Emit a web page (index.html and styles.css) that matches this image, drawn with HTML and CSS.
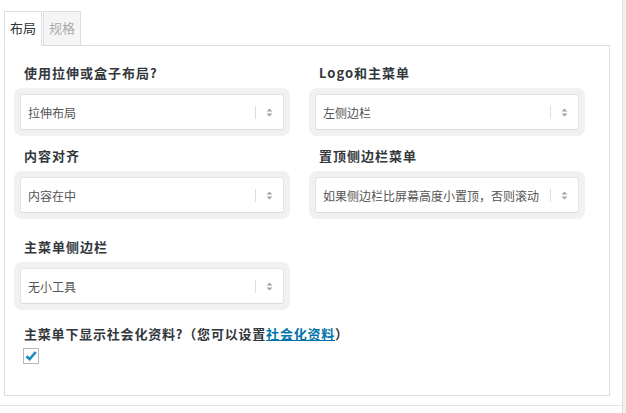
FILE: index.html
```html
<!DOCTYPE html>
<html lang="zh-CN">
<head>
    <meta charset="UTF-8">
    <title>主题选项</title>
    <link rel="stylesheet" href="styles.css">
</head>
<body>
    <div class="page">
        <div class="options-box">
            <div class="tabs">
                <div class="tab active">布局</div>
                <div class="tab">规格</div>
            </div>

            <div class="panel">
                <div class="row">
                    <div class="field">
                        <div class="field-label">使用拉伸或盒子布局?</div>
                        <div class="select-wrap">
                            <div class="select">
                                <span class="select-text">拉伸布局</span>
                                <span class="select-sep"></span>
                                <svg class="select-arrows" width="7" height="9" viewBox="0 0 7 9"><path d="M3.5 0.5 L6.5 3.5 L0.5 3.5 Z M3.5 8.5 L6.5 5.5 L0.5 5.5 Z" fill="#a0a5aa"/></svg>
                            </div>
                        </div>
                    </div>
                    <div class="field">
                        <div class="field-label">Logo和主菜单</div>
                        <div class="select-wrap">
                            <div class="select">
                                <span class="select-text">左侧边栏</span>
                                <span class="select-sep"></span>
                                <svg class="select-arrows" width="7" height="9" viewBox="0 0 7 9"><path d="M3.5 0.5 L6.5 3.5 L0.5 3.5 Z M3.5 8.5 L6.5 5.5 L0.5 5.5 Z" fill="#a0a5aa"/></svg>
                            </div>
                        </div>
                    </div>
                    <div class="field">
                        <div class="field-label">内容对齐</div>
                        <div class="select-wrap">
                            <div class="select">
                                <span class="select-text">内容在中</span>
                                <span class="select-sep"></span>
                                <svg class="select-arrows" width="7" height="9" viewBox="0 0 7 9"><path d="M3.5 0.5 L6.5 3.5 L0.5 3.5 Z M3.5 8.5 L6.5 5.5 L0.5 5.5 Z" fill="#a0a5aa"/></svg>
                            </div>
                        </div>
                    </div>
                    <div class="field">
                        <div class="field-label">置顶侧边栏菜单</div>
                        <div class="select-wrap">
                            <div class="select">
                                <span class="select-text">如果侧边栏比屏幕高度小置顶，否则滚动</span>
                                <span class="select-sep"></span>
                                <svg class="select-arrows" width="7" height="9" viewBox="0 0 7 9"><path d="M3.5 0.5 L6.5 3.5 L0.5 3.5 Z M3.5 8.5 L6.5 5.5 L0.5 5.5 Z" fill="#a0a5aa"/></svg>
                            </div>
                        </div>
                    </div>
                </div>

                <div class="row row-spaced">
                    <div class="field">
                        <div class="field-label">主菜单侧边栏</div>
                        <div class="select-wrap">
                            <div class="select">
                                <span class="select-text">无小工具</span>
                                <span class="select-sep"></span>
                                <svg class="select-arrows" width="7" height="9" viewBox="0 0 7 9"><path d="M3.5 0.5 L6.5 3.5 L0.5 3.5 Z M3.5 8.5 L6.5 5.5 L0.5 5.5 Z" fill="#a0a5aa"/></svg>
                            </div>
                        </div>
                    </div>
                </div>

                <div class="check-field">
                    <div class="field-label">主菜单下显示社会化资料?（您可以设置<a href="#" class="link">社会化资料</a>）</div>
                    <div class="checkbox">
                        <svg width="14" height="14" viewBox="0 0 14 14"><path d="M2.5 7.2 L5.6 10.2 L11.8 3" fill="none" stroke="#1e8cbe" stroke-width="2.6" stroke-linejoin="miter"/></svg>
                    </div>
                </div>
            </div>
        </div>
    </div>
</body>
</html>
```

FILE: styles.css
```css
body {
    margin: 0;
    background-color: #f1f1f1;
    font-family: 'Noto Sans CJK SC', 'Noto Sans', sans-serif;
    font-size: 13px;
    color: #32373c;
}

.page {
    width: 622px;
    height: 413px;
    background-color: white;
    border-right: 1px solid #dedede;
}

.options-box {
    box-sizing: border-box;
    height: 406px;
    padding: 11px 0 0 4px;
    border-bottom: 1px solid #e5e5e5;
}

.tabs {
    display: flex;
    gap: 1px;
}

.tab {
    position: relative;
    height: 33px;
    line-height: 32px;
    padding: 0 5px;
    border: 1px solid #dddddd;
    background-color: #f5f5f5;
    color: #aaaaaa;
    margin-bottom: -1px;
}

.tab.active {
    z-index: 1;
    background-color: white;
    border-bottom-color: white;
    color: #333333;
}

.panel {
    box-sizing: border-box;
    width: 606px;
    height: 351px;
    border: 1px solid #dddddd;
    padding: 17px 9px 0 9px;
}

.row {
    display: grid;
    grid-template-columns: 276px 276px;
    column-gap: 19px;
    row-gap: 10px;
}

.row-spaced {
    margin-top: 18px;
}

.field-label {
    padding-left: 10px;
    line-height: 19px;
    font-weight: bold;
    letter-spacing: 1px;
    color: #32373c;
}

.select-wrap {
    margin-top: 6px;
    padding: 6px;
    background-color: #f1f1f1;
    border-radius: 8px;
}

.select {
    box-sizing: border-box;
    height: 36px;
    display: flex;
    align-items: center;
    padding: 0 10px 0 7px;
    background-color: white;
    border: 1px solid #dfe4e8;
    border-bottom-color: #d5dde3;
    border-radius: 3px;
}

.select-text {
    flex: 1;
    min-width: 0;
    font-size: 12px;
    color: #555555;
    white-space: nowrap;
}

.select-sep {
    flex-shrink: 0;
    width: 1px;
    height: 13px;
    background-color: #dddddd;
    margin: 0 10px 0 6px;
}

.select-arrows {
    display: block;
    flex-shrink: 0;
}

.check-field {
    margin-top: 14px;
}

.check-field .field-label {
    letter-spacing: 0.8px;
}

.link {
    color: #0073aa;
    text-decoration: underline;
}

.checkbox {
    box-sizing: border-box;
    width: 16px;
    height: 16px;
    margin: 5px 0 0 9px;
    border: 1px solid #b4b9be;
    background-color: #fdfdfd;
    display: flex;
    align-items: center;
    justify-content: center;
}
```
